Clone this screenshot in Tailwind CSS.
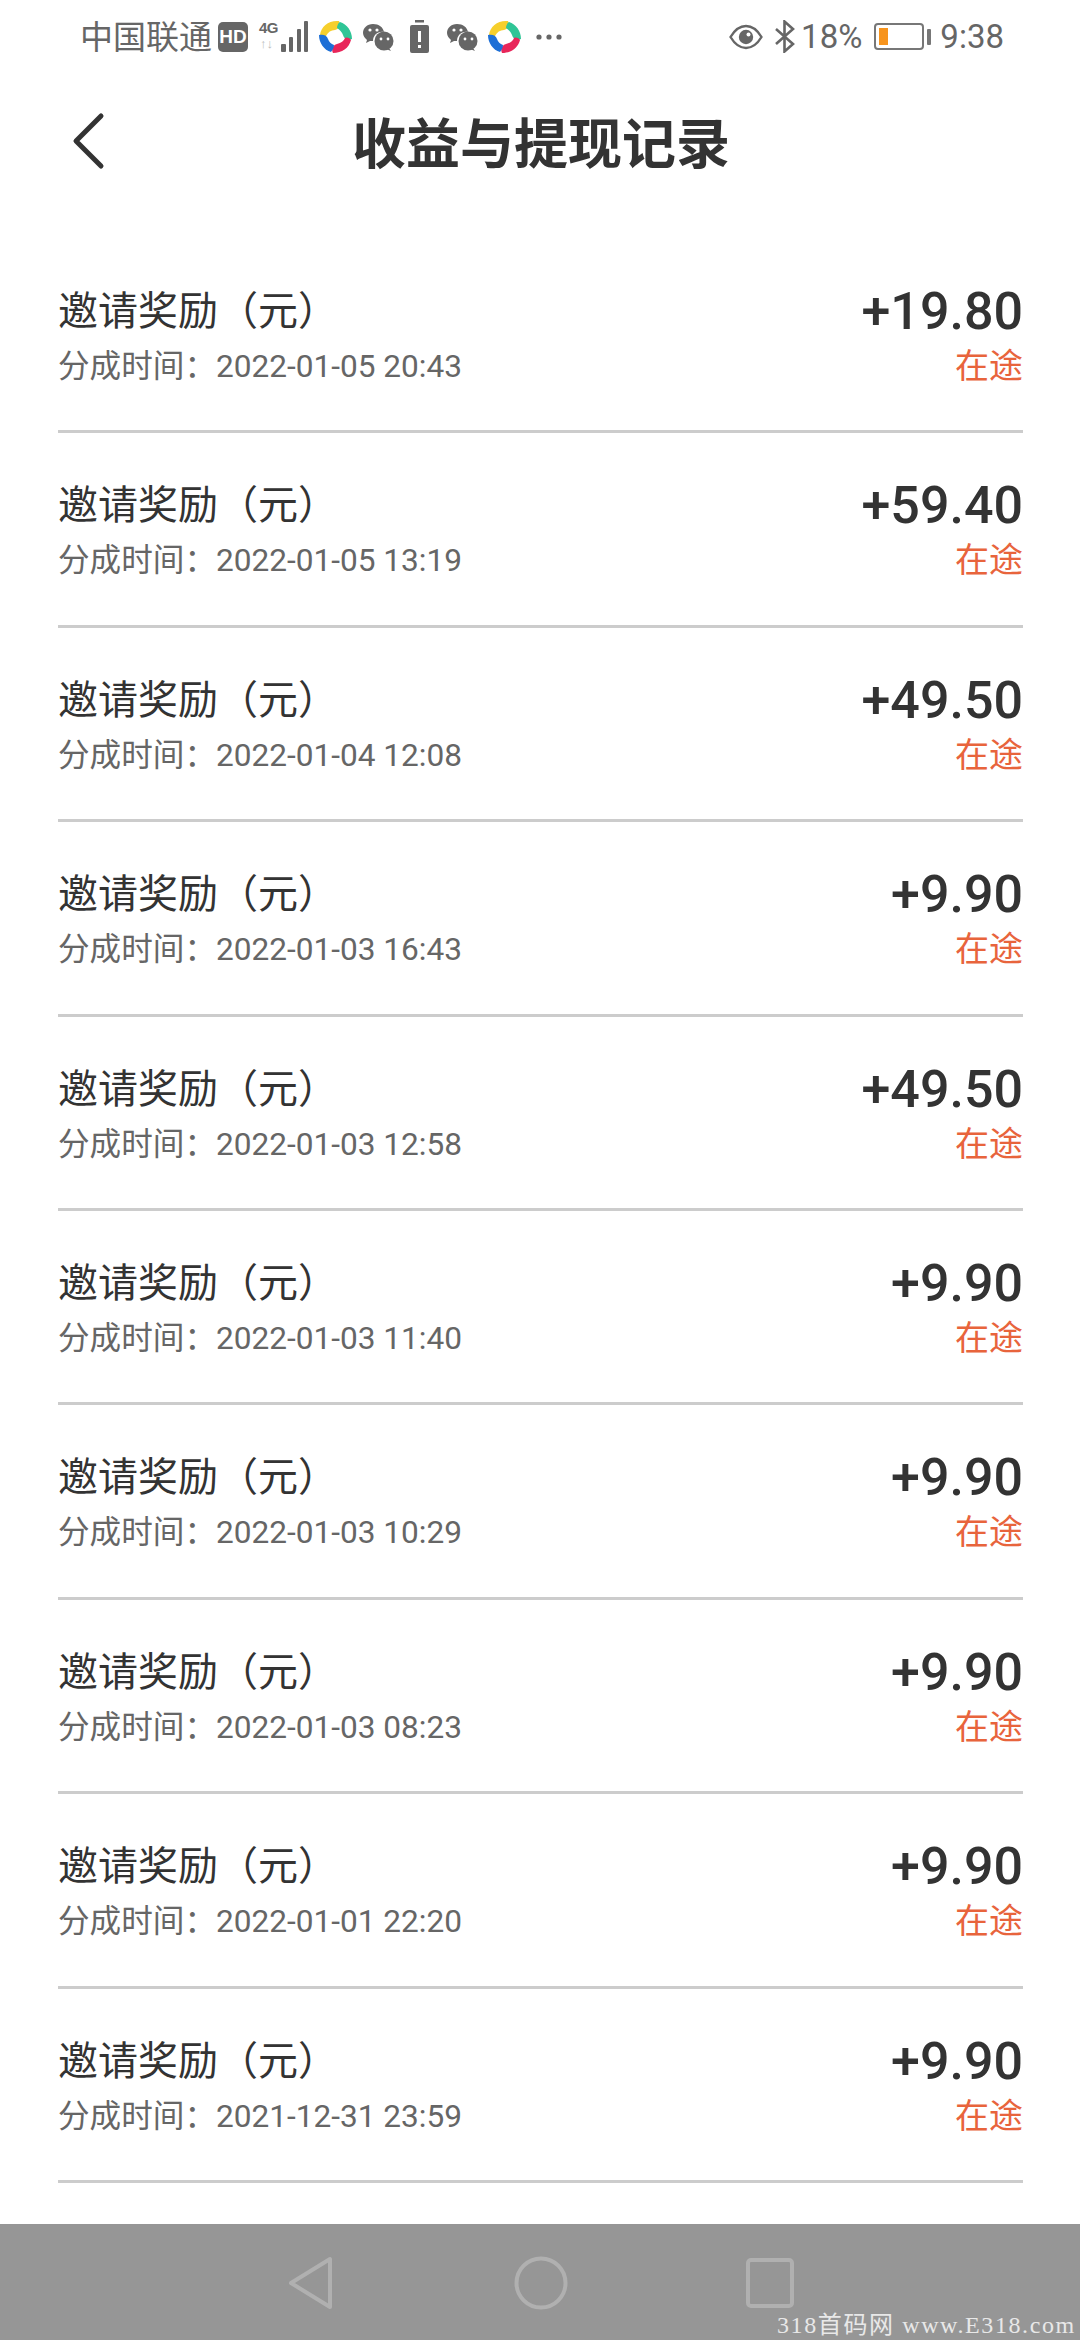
<!DOCTYPE html>
<html lang="zh-CN">
<head>
<meta charset="utf-8">
<script src="https://cdn.jsdelivr.net/npm/@tailwindcss/browser@4"></script>
</head>
<body class="m-0 bg-white">
<div class="relative w-[1080px] h-[2340px] flex flex-col bg-white overflow-hidden font-['Roboto','Noto_Sans_CJK_SC',sans-serif]">

  <!-- status bar -->
  <div class="h-[73px] flex items-center pl-[80px] pr-[76px] text-[#666666]">
    <span class="text-[33px] leading-none font-['Noto_Sans_CJK_SC',sans-serif] -mt-[2px]">中国联通</span>
    <span class="ml-[6px] w-[30px] h-[30px] rounded-[5px] bg-[#666666] text-white text-[19px] leading-[30px] font-bold text-center font-['Liberation_Sans',sans-serif]">HD</span>
    <div class="ml-[11px] w-[49px] h-[33px] relative">
      <span class="absolute left-0 top-[0px] text-[15px] leading-[15px] font-bold font-['Liberation_Sans',sans-serif] tracking-[-0.5px]">4G</span>
      <span class="absolute left-[1px] top-[17px] text-[13px] leading-[14px] text-[#bbbbbb] font-bold font-['Liberation_Sans',sans-serif]">↑↓</span>
      <svg class="absolute left-0 top-0" width="49" height="33" viewBox="0 0 49 33" fill="#666666">
        <rect x="22" y="24" width="5" height="8" rx="1"/><rect x="30" y="17" width="4" height="15" rx="1"/><rect x="38" y="9" width="4" height="23" rx="1"/><rect x="45" y="1" width="4" height="31" rx="1"/>
      </svg>
    </div>
    <svg class="ml-[11px]" width="33" height="33" viewBox="0 0 33 33" fill="none">
      <path d="M1 15 C2 6 10 0 20 1 C22 5 20 9 16 10 C12 10 9 12 7 16 C5 17 2 17 1 15 Z" fill="#f6cf2c"/>
      <path d="M21 2 C28 4 33 11 33 19 C29 21 25 19 24 15 C23 12 21 10 18 8 C18 6 19 3 21 2 Z" fill="#2fc596"/>
      <path d="M32 20 C30 28 23 33 14 33 C12 29 14 25 18 24 C22 23 25 21 26 18 C28 17 31 18 32 20 Z" fill="#e8265a"/>
      <path d="M12 32 C5 30 0 23 0 15 C4 14 8 15 9 19 C10 22 12 24 15 25 C15 27 14 30 12 32 Z" fill="#1d6fd6"/>
    </svg>
    <svg class="ml-[10px]" width="32" height="28" viewBox="0 0 32 28" fill="#666666">
      <path d="M11 1 C5 1 1 5 1 10 C1 13 3 15 5 17 L4 20 L8 18 C9 18 10 18 11 18 C11 12 16 8 22 9 C21 4 17 1 11 1 Z"/>
      <circle cx="22" cy="18" r="9.5"/>
      <path d="M27 25 L29 28 L24 26 Z"/>
      <circle cx="8" cy="7" r="1.6" fill="#fff"/><circle cx="15" cy="7" r="1.6" fill="#fff"/><circle cx="19" cy="16" r="1.4" fill="#fff"/><circle cx="26" cy="16" r="1.4" fill="#fff"/>
    </svg>
    <svg class="ml-[16px]" width="19" height="33" viewBox="0 0 19 33" fill="#666666">
      <rect x="5" y="0" width="9" height="2.5"/>
      <path fill-rule="evenodd" d="M2 5 H17 a2 2 0 0 1 2 2 V31 a2 2 0 0 1 -2 2 H2 a2 2 0 0 1 -2 -2 V7 a2 2 0 0 1 2 -2 Z M8 11 V22 H11 V11 Z M8 25 V28 H11 V25 Z"/>
    </svg>
    <svg class="ml-[17px]" width="32" height="28" viewBox="0 0 32 28" fill="#666666">
      <path d="M11 1 C5 1 1 5 1 10 C1 13 3 15 5 17 L4 20 L8 18 C9 18 10 18 11 18 C11 12 16 8 22 9 C21 4 17 1 11 1 Z"/>
      <circle cx="22" cy="18" r="9.5"/>
      <path d="M27 25 L29 28 L24 26 Z"/>
      <circle cx="8" cy="7" r="1.6" fill="#fff"/><circle cx="15" cy="7" r="1.6" fill="#fff"/><circle cx="19" cy="16" r="1.4" fill="#fff"/><circle cx="26" cy="16" r="1.4" fill="#fff"/>
    </svg>
    <svg class="ml-[10px]" width="33" height="33" viewBox="0 0 33 33" fill="none">
      <path d="M1 15 C2 6 10 0 20 1 C22 5 20 9 16 10 C12 10 9 12 7 16 C5 17 2 17 1 15 Z" fill="#f6cf2c"/>
      <path d="M21 2 C28 4 33 11 33 19 C29 21 25 19 24 15 C23 12 21 10 18 8 C18 6 19 3 21 2 Z" fill="#2fc596"/>
      <path d="M32 20 C30 28 23 33 14 33 C12 29 14 25 18 24 C22 23 25 21 26 18 C28 17 31 18 32 20 Z" fill="#e8265a"/>
      <path d="M12 32 C5 30 0 23 0 15 C4 14 8 15 9 19 C10 22 12 24 15 25 C15 27 14 30 12 32 Z" fill="#1d6fd6"/>
    </svg>
    <svg class="ml-[15px]" width="26" height="6" viewBox="0 0 26 6" fill="#666666"><circle cx="3" cy="3" r="2.6"/><circle cx="13" cy="3" r="2.6"/><circle cx="23" cy="3" r="2.6"/></svg>

    <div class="ml-auto flex items-center">
      <svg width="34" height="26" viewBox="0 0 34 26" fill="none">
        <path d="M1.5 13 C6 5.5 11 2 17 2 C23 2 28 5.5 32.5 13 C28 20.5 23 24 17 24 C11 24 6 20.5 1.5 13 Z" stroke="#666666" stroke-width="2.4"/>
        <circle cx="17" cy="13" r="7.2" fill="#666666"/><circle cx="19.5" cy="10.5" r="2" fill="#ffffff"/>
      </svg>
      <svg class="ml-[12px]" width="20" height="33" viewBox="0 0 20 33" fill="none" stroke="#666666" stroke-width="2.6">
        <path d="M1 9 L18 24 L9.5 31.5 V1.5 L18 9 L1 24"/>
      </svg>
      <span class="ml-[6px] text-[33px] leading-none">18%</span>
      <div class="ml-[12px] w-[50px] h-[27px] rounded-[4px] border-2 border-[#777777] p-[3px] flex">
        <div class="w-[9px] h-full bg-[#f7941d]"></div>
      </div>
      <div class="ml-[3px] w-[4px] h-[16px] rounded-[1px] bg-[#777777]"></div>
      <span class="ml-[9px] text-[33px] leading-none">9:38</span>
    </div>
  </div>

  <!-- header -->
  <div class="relative h-[166px] flex justify-center pt-[38px] pl-[2px]">
    <svg class="absolute left-[70px] top-[39px]" width="36" height="58" viewBox="0 0 36 58" fill="none">
      <path d="M31 4 L6 29 L31 54" stroke="#333333" stroke-width="5" stroke-linecap="round" stroke-linejoin="round"/>
    </svg>
    <h1 class="m-0 text-[54px] leading-[60px] font-bold text-[#333333] font-['Noto_Sans_CJK_SC',sans-serif]">收益与提现记录</h1>
  </div>

  <!-- list -->
  <div class="pl-[58px] pr-[57px] flex flex-col">
    <div class="h-[194.4px] pt-[44px] flex justify-between border-b-[3px] border-[#cccccc]">
      <div><div class="text-[40px] leading-[50px] text-[#333333] font-['Noto_Sans_CJK_SC',sans-serif]">邀请奖励（元）</div><div class="mt-[14px] text-[31.6px] leading-[40px] text-[#666666]">分成时间：2022-01-05 20:43</div></div>
      <div class="text-right"><div class="mt-[4px] text-[52px] leading-[50px] font-medium text-[#333333]">+19.80</div><div class="mt-[5px] text-[34px] leading-[44px] text-[#e8643c] font-['Noto_Sans_CJK_SC',sans-serif]">在途</div></div>
    </div>
    <div class="h-[194.4px] pt-[44px] flex justify-between border-b-[3px] border-[#cccccc]">
      <div><div class="text-[40px] leading-[50px] text-[#333333] font-['Noto_Sans_CJK_SC',sans-serif]">邀请奖励（元）</div><div class="mt-[14px] text-[31.6px] leading-[40px] text-[#666666]">分成时间：2022-01-05 13:19</div></div>
      <div class="text-right"><div class="mt-[4px] text-[52px] leading-[50px] font-medium text-[#333333]">+59.40</div><div class="mt-[5px] text-[34px] leading-[44px] text-[#e8643c] font-['Noto_Sans_CJK_SC',sans-serif]">在途</div></div>
    </div>
    <div class="h-[194.4px] pt-[44px] flex justify-between border-b-[3px] border-[#cccccc]">
      <div><div class="text-[40px] leading-[50px] text-[#333333] font-['Noto_Sans_CJK_SC',sans-serif]">邀请奖励（元）</div><div class="mt-[14px] text-[31.6px] leading-[40px] text-[#666666]">分成时间：2022-01-04 12:08</div></div>
      <div class="text-right"><div class="mt-[4px] text-[52px] leading-[50px] font-medium text-[#333333]">+49.50</div><div class="mt-[5px] text-[34px] leading-[44px] text-[#e8643c] font-['Noto_Sans_CJK_SC',sans-serif]">在途</div></div>
    </div>
    <div class="h-[194.4px] pt-[44px] flex justify-between border-b-[3px] border-[#cccccc]">
      <div><div class="text-[40px] leading-[50px] text-[#333333] font-['Noto_Sans_CJK_SC',sans-serif]">邀请奖励（元）</div><div class="mt-[14px] text-[31.6px] leading-[40px] text-[#666666]">分成时间：2022-01-03 16:43</div></div>
      <div class="text-right"><div class="mt-[4px] text-[52px] leading-[50px] font-medium text-[#333333]">+9.90</div><div class="mt-[5px] text-[34px] leading-[44px] text-[#e8643c] font-['Noto_Sans_CJK_SC',sans-serif]">在途</div></div>
    </div>
    <div class="h-[194.4px] pt-[44px] flex justify-between border-b-[3px] border-[#cccccc]">
      <div><div class="text-[40px] leading-[50px] text-[#333333] font-['Noto_Sans_CJK_SC',sans-serif]">邀请奖励（元）</div><div class="mt-[14px] text-[31.6px] leading-[40px] text-[#666666]">分成时间：2022-01-03 12:58</div></div>
      <div class="text-right"><div class="mt-[4px] text-[52px] leading-[50px] font-medium text-[#333333]">+49.50</div><div class="mt-[5px] text-[34px] leading-[44px] text-[#e8643c] font-['Noto_Sans_CJK_SC',sans-serif]">在途</div></div>
    </div>
    <div class="h-[194.4px] pt-[44px] flex justify-between border-b-[3px] border-[#cccccc]">
      <div><div class="text-[40px] leading-[50px] text-[#333333] font-['Noto_Sans_CJK_SC',sans-serif]">邀请奖励（元）</div><div class="mt-[14px] text-[31.6px] leading-[40px] text-[#666666]">分成时间：2022-01-03 11:40</div></div>
      <div class="text-right"><div class="mt-[4px] text-[52px] leading-[50px] font-medium text-[#333333]">+9.90</div><div class="mt-[5px] text-[34px] leading-[44px] text-[#e8643c] font-['Noto_Sans_CJK_SC',sans-serif]">在途</div></div>
    </div>
    <div class="h-[194.4px] pt-[44px] flex justify-between border-b-[3px] border-[#cccccc]">
      <div><div class="text-[40px] leading-[50px] text-[#333333] font-['Noto_Sans_CJK_SC',sans-serif]">邀请奖励（元）</div><div class="mt-[14px] text-[31.6px] leading-[40px] text-[#666666]">分成时间：2022-01-03 10:29</div></div>
      <div class="text-right"><div class="mt-[4px] text-[52px] leading-[50px] font-medium text-[#333333]">+9.90</div><div class="mt-[5px] text-[34px] leading-[44px] text-[#e8643c] font-['Noto_Sans_CJK_SC',sans-serif]">在途</div></div>
    </div>
    <div class="h-[194.4px] pt-[44px] flex justify-between border-b-[3px] border-[#cccccc]">
      <div><div class="text-[40px] leading-[50px] text-[#333333] font-['Noto_Sans_CJK_SC',sans-serif]">邀请奖励（元）</div><div class="mt-[14px] text-[31.6px] leading-[40px] text-[#666666]">分成时间：2022-01-03 08:23</div></div>
      <div class="text-right"><div class="mt-[4px] text-[52px] leading-[50px] font-medium text-[#333333]">+9.90</div><div class="mt-[5px] text-[34px] leading-[44px] text-[#e8643c] font-['Noto_Sans_CJK_SC',sans-serif]">在途</div></div>
    </div>
    <div class="h-[194.4px] pt-[44px] flex justify-between border-b-[3px] border-[#cccccc]">
      <div><div class="text-[40px] leading-[50px] text-[#333333] font-['Noto_Sans_CJK_SC',sans-serif]">邀请奖励（元）</div><div class="mt-[14px] text-[31.6px] leading-[40px] text-[#666666]">分成时间：2022-01-01 22:20</div></div>
      <div class="text-right"><div class="mt-[4px] text-[52px] leading-[50px] font-medium text-[#333333]">+9.90</div><div class="mt-[5px] text-[34px] leading-[44px] text-[#e8643c] font-['Noto_Sans_CJK_SC',sans-serif]">在途</div></div>
    </div>
    <div class="h-[194.4px] pt-[44px] flex justify-between border-b-[3px] border-[#cccccc]">
      <div><div class="text-[40px] leading-[50px] text-[#333333] font-['Noto_Sans_CJK_SC',sans-serif]">邀请奖励（元）</div><div class="mt-[14px] text-[31.6px] leading-[40px] text-[#666666]">分成时间：2021-12-31 23:59</div></div>
      <div class="text-right"><div class="mt-[4px] text-[52px] leading-[50px] font-medium text-[#333333]">+9.90</div><div class="mt-[5px] text-[34px] leading-[44px] text-[#e8643c] font-['Noto_Sans_CJK_SC',sans-serif]">在途</div></div>
    </div>
  </div>

  <!-- navigation bar -->
  <div class="relative mt-auto h-[116px] bg-[#969696] flex items-start pt-[32px] pl-[287px]">
    <svg width="46" height="54" viewBox="0 0 46 54" fill="none"><path d="M43 3 V51 L4 27 Z" stroke="#b0b0b0" stroke-width="4" stroke-linejoin="round"/></svg>
    <svg class="ml-[181px]" width="54" height="54" viewBox="0 0 54 54" fill="none"><circle cx="27" cy="27" r="24.5" stroke="#b0b0b0" stroke-width="4"/></svg>
    <svg class="ml-[178px] mt-[2px]" width="48" height="50" viewBox="0 0 48 50" fill="none"><rect x="2" y="2" width="44" height="46" rx="3" stroke="#b0b0b0" stroke-width="4"/></svg>
    <div class="absolute left-[777px] bottom-[0px] text-[24px] leading-[30px] whitespace-nowrap tracking-[1.6px] text-[#e8e8e8] font-['Liberation_Serif','Noto_Sans_CJK_SC',serif]">318首码网 www.E318.com</div>
  </div>
</div>
</body>
</html>
